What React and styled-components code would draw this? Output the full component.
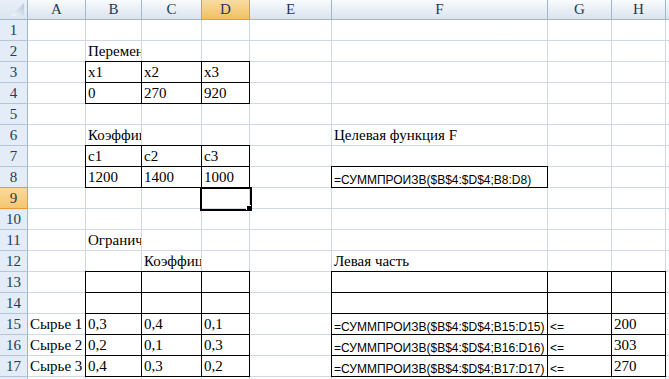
import React from 'react';
import styled, { createGlobalStyle, css } from 'styled-components';

const GlobalStyle = createGlobalStyle`
  html, body {
    margin: 0;
    padding: 0;
    background: #ffffff;
  }
`;

const GRID = '#d0d7e5';
const HEAD_LINE = '#9eb6ce';
const ORANGE = '#f29536';

const Sheet = styled.div`
  width: 669px;
  height: 379px;
  overflow: hidden;
  display: grid;
  grid-template-columns: 28px 58px 56px 60px 48px 82px 216px 64px 54px 64px;
  grid-template-rows: 20px repeat(18, 21px);
  font-family: 'Liberation Serif', 'Times New Roman', serif;
  background: #fff;
`;

const Corner = styled.div`
  box-sizing: border-box;
  border-right: 1px solid ${HEAD_LINE};
  border-bottom: 1px solid ${HEAD_LINE};
  background: linear-gradient(#e9eff7, #dbe5f1);
  display: flex;
  align-items: flex-end;
  justify-content: flex-end;
  padding: 0 2px 2px 0;
`;

const ColHead = styled.div`
  box-sizing: border-box;
  border-right: 1px solid ${HEAD_LINE};
  border-bottom: 1px solid ${HEAD_LINE};
  background: linear-gradient(#f9fbfd, #dbe3ee);
  color: #243b55;
  font-size: 15px;
  line-height: 19px;
  text-align: center;
  overflow: hidden;
  ${(p) =>
    p.$active &&
    css`
      background: linear-gradient(#f9dba3, #f1c15f);
      border-right-color: ${ORANGE};
      border-bottom-color: ${ORANGE};
      box-shadow: -1px 0 0 ${ORANGE};
      position: relative;
    `}
`;

const RowHead = styled.div`
  box-sizing: border-box;
  border-right: 1px solid ${HEAD_LINE};
  border-bottom: 1px solid #b4c5da;
  background: #e4ecf7;
  color: #243b55;
  font-size: 15px;
  line-height: 20px;
  text-align: center;
  ${(p) =>
    p.$active &&
    css`
      background: linear-gradient(#f9d99c, #f4c76e);
      border-right-color: ${ORANGE};
      border-bottom-color: ${ORANGE};
      box-shadow: 0 -1px 0 ${ORANGE};
      position: relative;
    `}
`;

const Cell = styled.div`
  box-sizing: border-box;
  border-right: 1px solid ${GRID};
  border-bottom: 1px solid ${GRID};
  padding-left: 2px;
  display: flex;
  align-items: flex-end;
  white-space: nowrap;
  overflow: hidden;
  color: #000;
  ${(p) =>
    p.$box &&
    css`
      border-right-color: #000;
      border-bottom-color: #000;
      box-shadow: -1px -1px 0 #000, 0 -1px 0 #000, -1px 0 0 #000;
    `}
  ${(p) =>
    p.$selected &&
    css`
      overflow: visible;
      position: relative;
      z-index: 1;
      &::before {
        content: '';
        position: absolute;
        left: -2px;
        top: -1px;
        width: 52px;
        height: 24px;
        box-sizing: border-box;
        border: 2px solid #000;
      }
      &::after {
        content: '';
        position: absolute;
        left: 45px;
        top: 18px;
        width: 5px;
        height: 5px;
        background: #000;
        box-shadow: -1px -1px 0 #fff;
      }
    `}
`;

const SerifText = styled.span`
  font-family: 'Liberation Serif', 'Times New Roman', serif;
  font-size: 15px;
  line-height: 20px;
`;

const SansText = styled.span`
  font-family: 'Liberation Sans', Arial, sans-serif;
  font-size: 12px;
  line-height: 14px;
`;

const formula = (r) => `=СУММПРОИЗВ($B$4:$D$4;B${r}:D${r})`;

// cells keyed by address: [text, font, boxed]
const data = {
  B2: ['Переменные'],
  B3: ['x1', 'serif', true],
  C3: ['x2', 'serif', true],
  D3: ['x3', 'serif', true],
  B4: ['0', 'serif', true],
  C4: ['270', 'serif', true],
  D4: ['920', 'serif', true],
  B6: ['Коэффициенты'],
  F6: ['Целевая функция F'],
  B7: ['c1', 'serif', true],
  C7: ['c2', 'serif', true],
  D7: ['c3', 'serif', true],
  B8: ['1200', 'serif', true],
  C8: ['1400', 'serif', true],
  D8: ['1000', 'serif', true],
  F8: ['=СУММПРОИЗВ($B$4:$D$4;B8:D8)', 'sans', true],
  B11: ['Ограничения'],
  C12: ['Коэффициенты'],
  F12: ['Левая часть'],
};

['B', 'C', 'D', 'F', 'G', 'H'].forEach((c) => {
  data[c + 13] = ['', 'serif', true];
  data[c + 14] = ['', 'serif', true];
});

const limits = [
  [15, 'Сырье 1', '0,3', '0,4', '0,1', '200'],
  [16, 'Сырье 2', '0,2', '0,1', '0,3', '303'],
  [17, 'Сырье 3', '0,4', '0,3', '0,2', '270'],
];

limits.forEach(([r, name, b, c, d, h]) => {
  data['A' + r] = [name];
  data['B' + r] = [b, 'serif', true];
  data['C' + r] = [c, 'serif', true];
  data['D' + r] = [d, 'serif', true];
  data['F' + r] = [formula(r), 'sans', true];
  data['G' + r] = ['<=', 'sans', true];
  data['H' + r] = [h, 'serif', true];
});

const letters = ['A', 'B', 'C', 'D', 'E', 'F', 'G', 'H', 'I'];
const rows = Array.from({ length: 18 }, (_, i) => i + 1);

const SELECTED = 'D9';

const CornerMark = () => (
  <svg width="14" height="14" viewBox="0 0 14 14">
    <defs>
      <linearGradient id="cm" x1="0" y1="1" x2="1" y2="0">
        <stop offset="0" stopColor="#f4f7fb" />
        <stop offset="1" stopColor="#b6c6da" />
      </linearGradient>
    </defs>
    <polygon points="13,0 13,13 0,13" fill="url(#cm)" />
  </svg>
);

const App = () => {
  return (
    <>
      <GlobalStyle />
      <Sheet>
        <Corner>
          <CornerMark />
        </Corner>
        {letters.map((l) => (
          <ColHead key={l} $active={l === SELECTED[0]}>
            {l}
          </ColHead>
        ))}
        {rows.map((r) => (
          <React.Fragment key={r}>
            <RowHead $active={'D' + r === SELECTED}>{r}</RowHead>
            {letters.map((l) => {
              const addr = l + r;
              const [text, font = 'serif', box = false] = data[addr] || [''];
              return (
                <Cell key={addr} $box={box} $selected={addr === SELECTED}>
                  {font === 'sans' ? <SansText>{text}</SansText> : <SerifText>{text}</SerifText>}
                </Cell>
              );
            })}
          </React.Fragment>
        ))}
      </Sheet>
    </>
  );
};

export default App;
